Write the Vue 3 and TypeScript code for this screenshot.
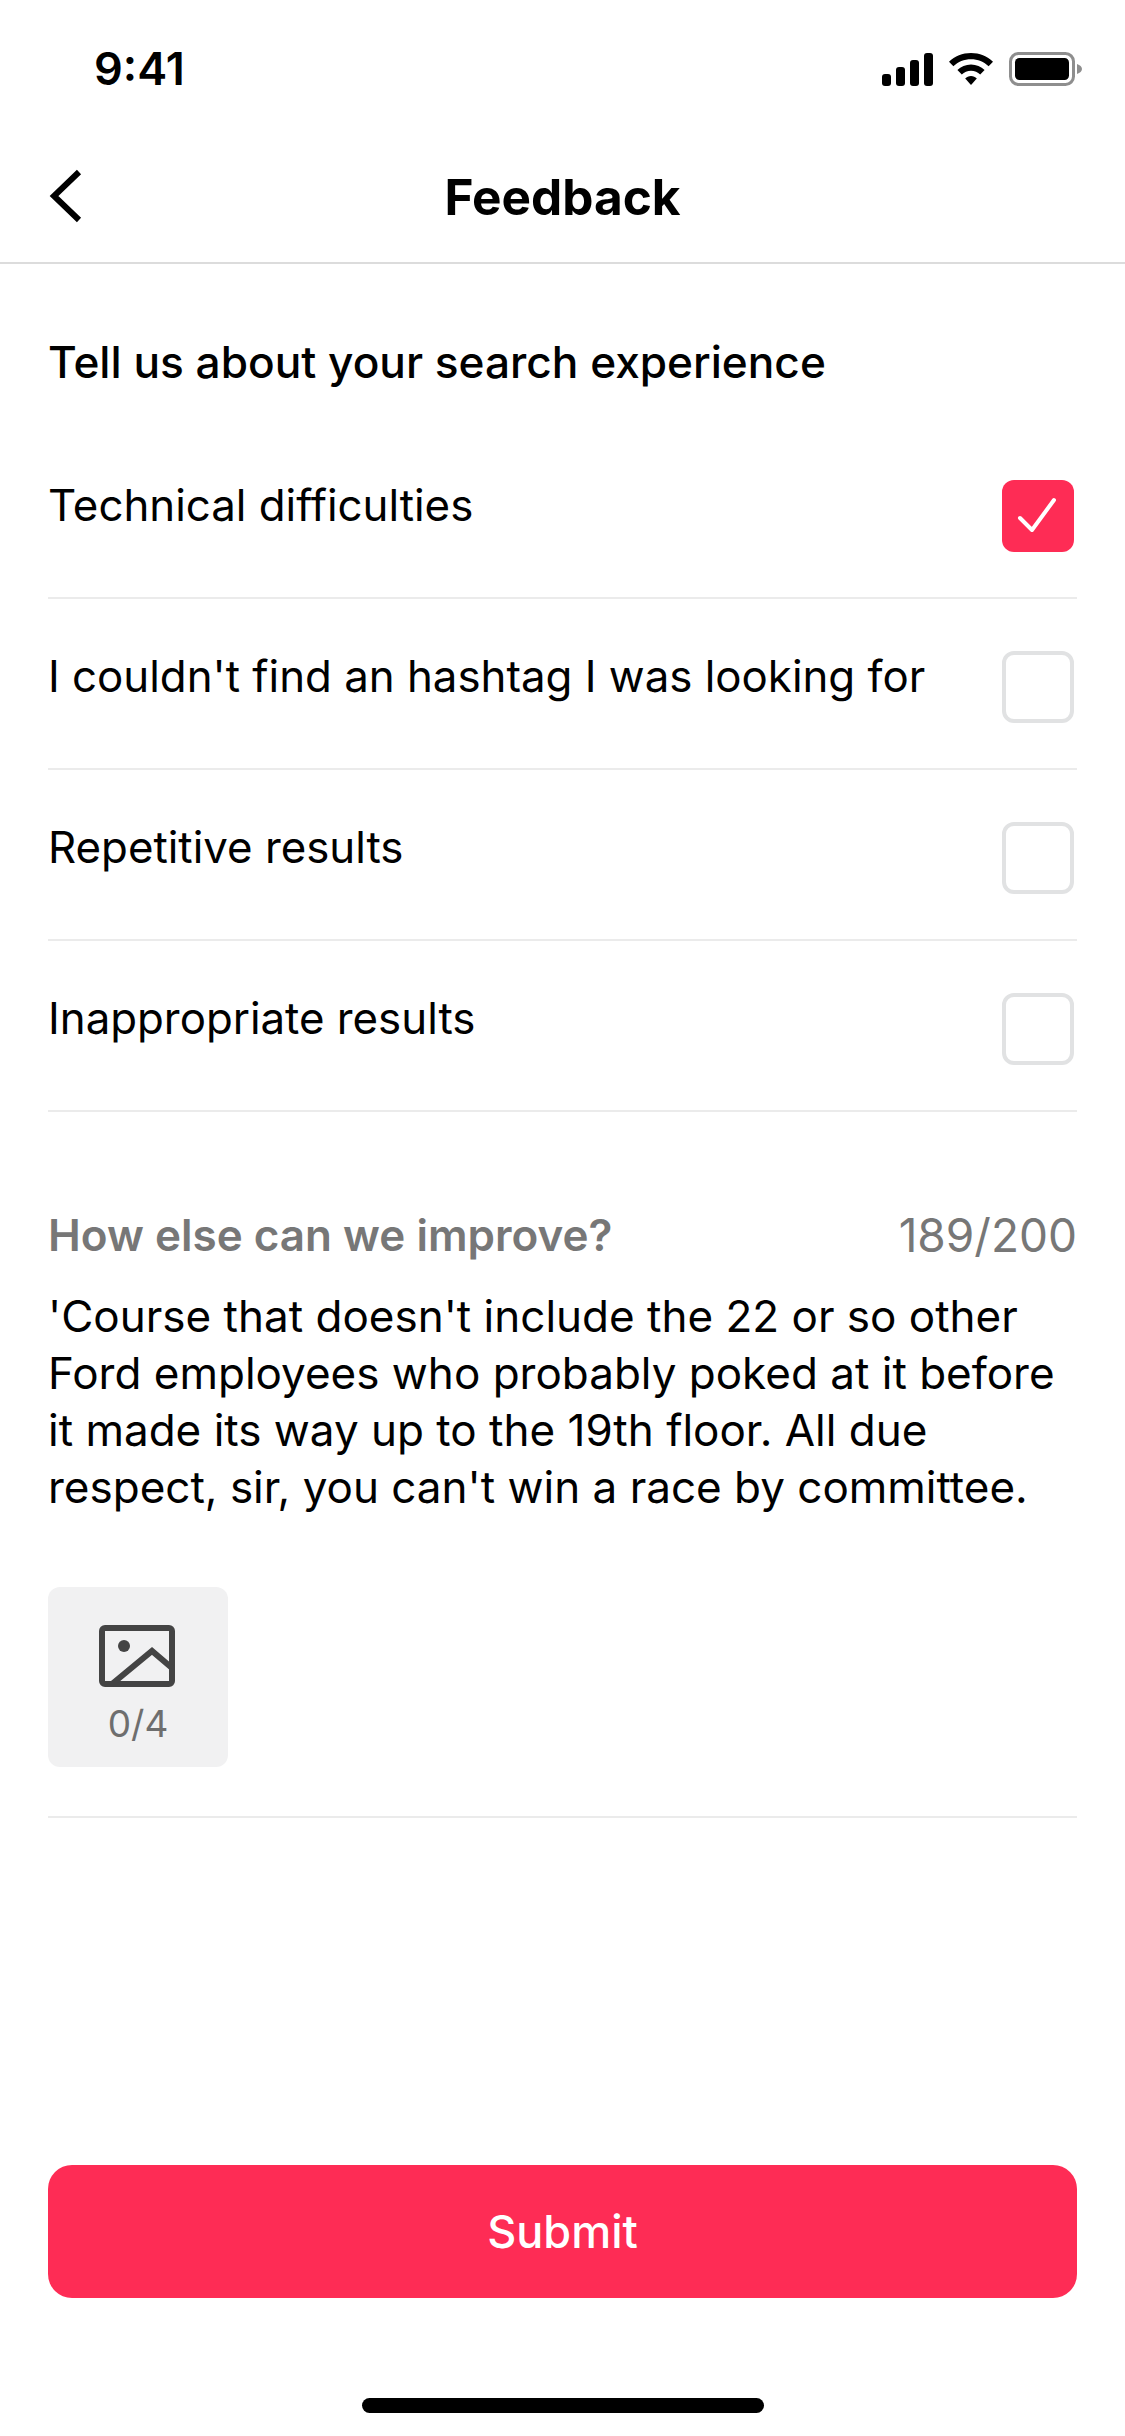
<script setup lang="ts">
const options: { label: string; checked: boolean }[] = [
  { label: 'Technical difficulties', checked: true },
  { label: "I couldn't find an hashtag I was looking for", checked: false },
  { label: 'Repetitive results', checked: false },
  { label: 'Inappropriate results', checked: false },
]
</script>

<template>
  <div class="page">
    <div class="status">
      <span class="time">9:41</span>
      <div class="status-icons">
        <svg width="51" height="33" viewBox="0 0 51 33"><rect x="0" y="21" width="9" height="12" rx="3"/><rect x="14" y="14" width="9" height="19" rx="3"/><rect x="28" y="7" width="9" height="26" rx="3"/><rect x="42" y="0" width="9" height="33" rx="3"/></svg>
        <svg width="46" height="33" viewBox="0 0 46 33"><path d="M23 0C14.500 0 6.800 3.300 1 8.800L5.400 13.300C10 8.900 16.200 6.300 23 6.300S36 8.900 40.600 13.300L45 8.800C39.200 3.300 31.500 0 23 0Z"/><path d="M23 11.500C17.700 11.500 12.900 13.600 9.400 17L13.800 21.500C16.200 19.200 19.400 17.800 23 17.800S29.800 19.200 32.200 21.500L36.600 17C33.100 13.600 28.300 11.500 23 11.500Z"/><path d="M23 23C20.700 23 18.700 23.900 17.200 25.400L23 32L28.800 25.400C27.300 23.900 25.300 23 23 23Z"/></svg>
        <svg width="73" height="34" viewBox="0 0 73 34"><rect x="1.500" y="1.500" width="63" height="31" rx="8" fill="none" stroke="#8e8e8e" stroke-width="3"/><rect x="6" y="6" width="54" height="22" rx="4.500"/><path d="M68 12C71 13 73 14.800 73 17S71 21 68 22Z" fill="#8e8e8e"/></svg>
      </div>
    </div>

    <header class="nav">
      <svg class="back" width="36" height="54" viewBox="0 0 36 54"><path d="M31 3L6 27L31 51" fill="none" stroke="#000" stroke-width="6"/></svg>
      <h1 class="title">Feedback</h1>
    </header>

    <main class="content">
      <h2 class="heading">Tell us about your search experience</h2>
      <ul class="options">
        <li v-for="o in options" :key="o.label" class="option">
          <span class="label">{{ o.label }}</span>
          <span v-if="o.checked" class="box checked">
            <svg width="42" height="38" viewBox="0 0 42 38"><path d="M3 21L15 33L37 3" fill="none" stroke="#fff" stroke-width="4" stroke-linecap="round" stroke-linejoin="round"/></svg>
          </span>
          <span v-else class="box"></span>
        </li>
      </ul>

      <section class="improve">
        <div class="improve-head">
          <span class="improve-title">How else can we improve?</span>
          <span class="count">189/200</span>
        </div>
        <p class="body">'Course that doesn't include the 22 or so other Ford employees who probably poked at it before it made its way up to the 19th floor. All due respect, sir, you can't win a race by committee.</p>
        <div class="tile">
          <svg class="tile-icon" width="76" height="62" viewBox="0 0 76 62">
            <rect x="3" y="3" width="70" height="56" rx="3" fill="none" stroke="#444" stroke-width="6"/>
            <circle cx="25" cy="21" r="6" fill="#444"/>
            <path d="M13 59L53 26L73 43" fill="none" stroke="#444" stroke-width="6"/>
          </svg>
          <span class="tile-count">0/4</span>
        </div>
      </section>
    </main>

    <footer class="footer">
      <button class="submit" type="button">Submit</button>
      <div class="home"></div>
    </footer>
  </div>
</template>

<style>
html, body { margin: 0; background: #fff; }
</style>

<style scoped>
.page { width: 1125px; height: 2436px; display: flex; flex-direction: column; background: #fff; color: #000; font-family: Inter, "Liberation Sans", sans-serif; box-sizing: border-box; overflow: hidden; }
.status { height: 132px; flex: none; display: flex; justify-content: space-between; align-items: flex-start; box-sizing: border-box; padding: 45px 43px 0 94px; }
.time { font-size: 45px; font-weight: 600; line-height: 48px; }
.status-icons { display: flex; gap: 15px; align-items: center; padding-top: 7px; }
.nav { height: 132px; flex: none; box-sizing: border-box; border-bottom: 2px solid #dcdcdc; display: flex; align-items: center; justify-content: center; position: relative; }
.back { position: absolute; left: 48px; top: 37px; }
.title { margin: 0; font-size: 49.500px; font-weight: 700; line-height: 135px; }
.content { flex: 1; padding: 0 48px; min-height: 0; }
.heading { margin: 0; padding-top: 71px; font-size: 44.200px; font-weight: 500; line-height: 54px; }
.options { list-style: none; margin: 0; padding: 0; }
.option { height: 171px; box-sizing: border-box; border-bottom: 2px solid #ebebeb; display: flex; justify-content: space-between; align-items: flex-start; padding: 51px 3px 0 0; }
.option:first-child { height: 210px; padding-top: 90px; }
.label { font-size: 43.800px; line-height: 54px; }
.box { width: 72px; height: 72px; box-sizing: border-box; border: 4px solid #e1e2e3; border-radius: 12px; margin-top: 1px; display: flex; align-items: center; justify-content: center; }
.box.checked { background: #fe2c55; border: none; }
.improve { padding-top: 96px; }
.improve-head { display: flex; justify-content: space-between; align-items: center; height: 54px; }
.improve-title { font-size: 44px; font-weight: 600; color: #777; }
.count { font-size: 46px; color: #777; }
.body { margin: 0; padding-top: 26px; font-size: 44px; line-height: 57px; }
.tile { margin-top: 71px; width: 180px; height: 180px; border-radius: 12px; background: #f1f1f2; display: flex; flex-direction: column; align-items: center; padding-top: 38px; box-sizing: border-box; }
.tile-icon { margin-left: -2px; flex: none; }
.tile-count { font-size: 37px; line-height: 40px; color: #6e6e6e; margin-top: 17px; }
.improve { border-bottom: 2px solid #ebebeb; padding-bottom: 49px; }
.footer { flex: none; padding: 0 48px; display: flex; flex-direction: column; align-items: center; }
.submit { width: 100%; height: 133px; border: none; border-radius: 24px; background: #fe2c55; color: #fff; font-family: inherit; font-size: 45px; font-weight: 500; padding: 0; }
.home { width: 402px; height: 15px; border-radius: 8px; background: #000; margin: 100px 0 23px; }
</style>
